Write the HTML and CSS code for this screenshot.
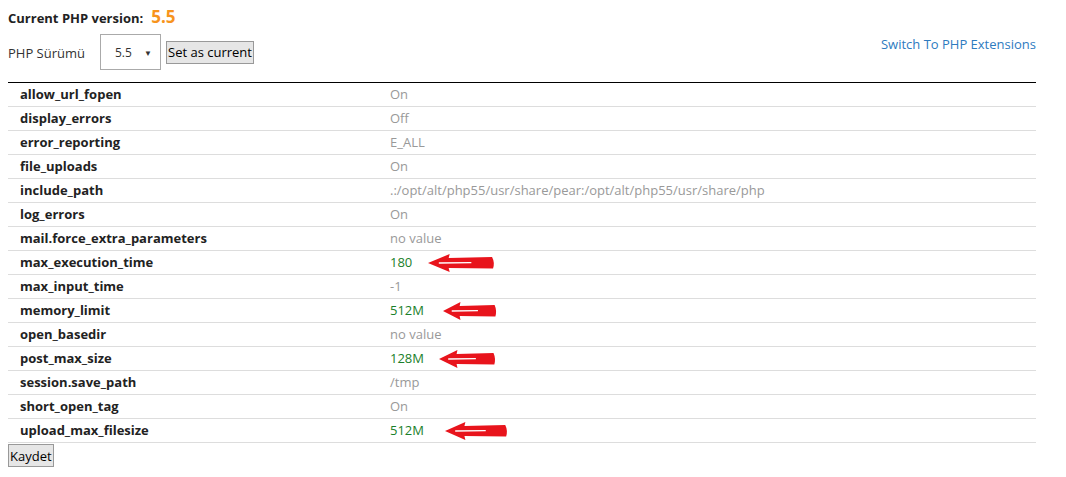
FILE: index.html
```html
<!DOCTYPE html>
<html lang="tr">
<head>
<meta charset="utf-8">
<title>PHP Selector</title>
<link rel="stylesheet" href="styles.css">
</head>
<body>
<div class="page">
  <div class="current"><span>Current PHP version:</span><span class="ver">5.5</span></div>
  <div class="toolbar">
    <div class="left">
      <span class="label">PHP Sürümü</span>
      <div class="select"><span>5.5</span><span class="caret">▼</span></div>
      <button class="btn">Set as current</button>
    </div>
    <a class="link" href="#">Switch To PHP Extensions</a>
  </div>
  <div class="table">
    <div class="row"><span class="name">allow_url_fopen</span><span class="val">On</span></div>
    <div class="row"><span class="name">display_errors</span><span class="val">Off</span></div>
    <div class="row"><span class="name">error_reporting</span><span class="val">E_ALL</span></div>
    <div class="row"><span class="name">file_uploads</span><span class="val">On</span></div>
    <div class="row"><span class="name">include_path</span><span class="val">.:/opt/alt/php55/usr/share/pear:/opt/alt/php55/usr/share/php</span></div>
    <div class="row"><span class="name">log_errors</span><span class="val">On</span></div>
    <div class="row"><span class="name">mail.force_extra_parameters</span><span class="val">no value</span></div>
    <div class="row"><span class="name">max_execution_time</span><span class="val green">180<svg class="arrow a1" width="67" height="18" viewBox="0 0 68 18" preserveAspectRatio="none"><path d="M0 9 L22 0 L21 4 L65 3 Q68 8.5 66 14.5 L21 14 L22 18 Z" fill="#e8141c"/><path d="M11 9 L44 8.7" stroke="#fff" stroke-width="1.3"/></svg></span></div>
    <div class="row"><span class="name">max_input_time</span><span class="val">-1</span></div>
    <div class="row"><span class="name">memory_limit</span><span class="val green">512M<svg class="arrow a2" width="54" height="18" viewBox="0 0 68 18" preserveAspectRatio="none"><path d="M0 9 L22 0 L21 4 L65 3 Q68 8.5 66 14.5 L21 14 L22 18 Z" fill="#e8141c"/><path d="M11 9 L44 8.7" stroke="#fff" stroke-width="1.3"/></svg></span></div>
    <div class="row"><span class="name">open_basedir</span><span class="val">no value</span></div>
    <div class="row"><span class="name">post_max_size</span><span class="val green">128M<svg class="arrow a3" width="57" height="18" viewBox="0 0 68 18" preserveAspectRatio="none"><path d="M0 9 L22 0 L21 4 L65 3 Q68 8.5 66 14.5 L21 14 L22 18 Z" fill="#e8141c"/><path d="M11 9 L44 8.7" stroke="#fff" stroke-width="1.3"/></svg></span></div>
    <div class="row"><span class="name">session.save_path</span><span class="val">/tmp</span></div>
    <div class="row"><span class="name">short_open_tag</span><span class="val">On</span></div>
    <div class="row"><span class="name">upload_max_filesize</span><span class="val green">512M<svg class="arrow a4" width="63" height="18" viewBox="0 0 68 18" preserveAspectRatio="none"><path d="M0 9 L22 0 L21 4 L65 3 Q68 8.5 66 14.5 L21 14 L22 18 Z" fill="#e8141c"/><path d="M11 9 L44 8.7" stroke="#fff" stroke-width="1.3"/></svg></span></div>
  </div>
  <button class="btn save">Kaydet</button>
</div>
</body>
</html>
```
FILE: styles.css
```css
html, body { margin: 0; padding: 0; background: #fff; }
body {
  font-family: "Open Sans", "Noto Sans", sans-serif;
  font-size: 13px;
  color: #333;
}
.page { width: 1028px; padding: 0 8px; }
.current {
  display: flex;
  align-items: baseline;
  font-weight: bold;
  font-size: 13px;
  color: #222;
  height: 20px;
  line-height: 20px;
  padding-top: 7px;
  overflow: hidden;
}
.current .ver { color: #f7941d; font-size: 17px; margin-left: 8px; }
.toolbar {
  box-sizing: border-box;
  display: flex;
  justify-content: space-between;
  align-items: flex-start;
  height: 55px;
  padding-top: 7px;
}
.left { display: flex; align-items: center; }
.label { width: 92px; color: #333; position: relative; top: 1px; }
.select {
  box-sizing: border-box;
  width: 61px;
  height: 36px;
  border: 1px solid #aaa;
  display: flex;
  align-items: center;
  justify-content: space-between;
  padding: 0 8px 0 14px;
  color: #333;
  font-size: 12px;
}
.caret { font-size: 8px; color: #333; }
.btn {
  font-family: "Open Sans", "Noto Sans", sans-serif;
  font-size: 13px;
  color: #000;
  background: #e6e6e6;
  border: 1px solid #999;
  border-radius: 0;
  padding: 0 1px;
  height: 23px;
  margin-left: 5px;
}
.link {
  color: #2e7bbf;
  text-decoration: none;
  margin-top: 1px;
}
.table { border-top: 1px solid #000; }
.row {
  display: flex;
  height: 23px;
  line-height: 23px;
  border-bottom: 1px solid #ddd;
}
.name { width: 370px; padding-left: 12px; font-weight: bold; color: #222; }
.val { color: #999; position: relative; }
.val.green { color: #1a7f2a; }
.arrow { position: absolute; top: 3px; height: 18px; }
.a1 { left: 38px; width: 67px; }
.a2 { left: 53px; width: 54px; }
.a3 { left: 49px; width: 57px; }
.a4 { left: 55px; width: 63px; }
.save { margin: 1px 0 0 0; }
```
